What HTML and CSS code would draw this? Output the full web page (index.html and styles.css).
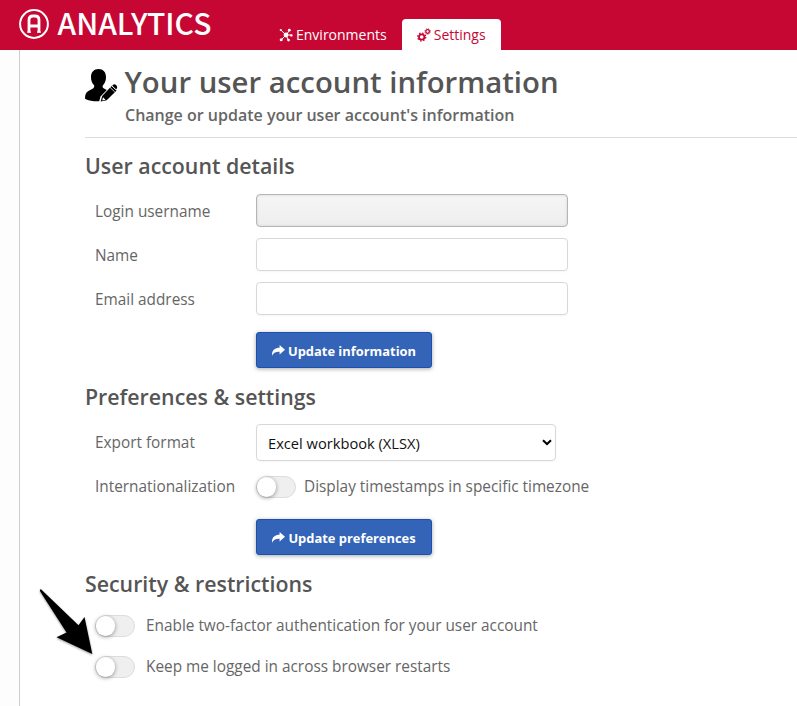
FILE: index.html
```html
<!DOCTYPE html>
<html lang="en">
<head>
<meta charset="utf-8">
<title>Analytics - Settings</title>
<link rel="stylesheet" href="styles.css">
</head>
<body>
<header class="topbar">
  <div class="brand">
    <svg class="brand-mark" viewBox="0 0 30 30" fill="none" stroke="#fff">
      <circle cx="15" cy="15" r="13.9" stroke-width="2"/>
      <path d="M10 23.5V11Q10 7 14 7H16Q20 7 20 11V23.5M10 17H20" stroke-width="2.8"/>
      <path d="M8.2 23.2H12M18 23.2H21.8" stroke-width="1.2"/>
    </svg>
    <span class="brand-name">ANALYTICS</span>
  </div>
  <nav class="tabs">
    <a class="tab">
      <svg class="tab-icon" viewBox="0 0 14 14" fill="currentColor" stroke="currentColor">
        <path d="M7 7L2 2.2M7 7L10.5 2.5M7 7H12.5M7 7L9.3 12M7 7L2.5 11.5" fill="none" stroke-width="1"/>
        <g stroke="none"><circle cx="7" cy="7" r="2.4"/><circle cx="1.8" cy="2" r="1.1"/><circle cx="10.3" cy="2.2" r="1.4"/><circle cx="12.4" cy="7.4" r="1.2"/><circle cx="9.5" cy="12.1" r="1.4"/><circle cx="2.2" cy="11.8" r="1.5"/></g>
      </svg><span>Environments</span>
    </a>
    <a class="tab tab-active">
      <svg class="tab-icon" viewBox="0 0 14 14" fill="none" stroke="currentColor">
        <circle cx="4.7" cy="9" r="2.7" stroke-width="1.8"/>
        <circle cx="4.7" cy="9" r="4" stroke-width="1.3" stroke-dasharray="1.5 1.64"/>
        <circle cx="10.6" cy="3.5" r="1.8" stroke-width="1.3"/>
        <circle cx="10.6" cy="3.5" r="2.7" stroke-width="1" stroke-dasharray="1.05 1.07"/>
      </svg><span>Settings</span>
    </a>
  </nav>
</header>
<div class="shell">
  <aside class="gutter"></aside>
  <main class="content">
    <div class="page-head">
      <svg class="user-icon" viewBox="0 0 32 33">
        <path d="M13.5 0C18.2 0 21 3.2 21 8C21 11.3 20 14.2 18 16.2C17.3 17 17.5 18.6 18.6 19.2C19.8 19.9 21 20.4 21.8 21L15.5 27.5L14.2 32.2H9C4.7 31.8 1.7 30.8 0 29.8C0 25.6 .8 23.3 3.4 21.9L8 19.5C9.3 18.8 9.6 17 8.9 16.1C7 14 6 11.4 6 8C6 3.2 9 0 13.5 0Z"/>
        <path d="M15.7 32.4L17.2 27L26.6 17.1L31.6 21.5L21.7 31.2Z"/>
        <path d="M28.1 15.7Q29.4 14.5 31 16L31.7 16.8Q32.7 18.2 31.7 19.7L31 20.5L27.2 16.7Z"/>
        <path d="M24.8 18.1L29.8 23M26.6 16.6L31.4 21.2" stroke="#fff" stroke-width=".8"/>
        <path d="M18 28.2L20.5 30.7L17.2 31.4Z" fill="#fff"/>
      </svg>
      <div>
        <h1>Your user account information</h1>
        <p class="subtitle">Change or update your user account's information</p>
      </div>
    </div>

    <section class="details">
      <h2>User account details</h2>
      <div class="row"><label>Login username</label><input type="text" disabled></div>
      <div class="row"><label>Name</label><input type="text"></div>
      <div class="row"><label>Email address</label><input type="text"></div>
      <button class="btn"><svg class="share" viewBox="0 0 13 11"><path d="M0 10.7C-.3 5.5 2.5 2.8 7.6 2.8V0L13 4.8L7.6 9.5V6.8C3.8 6.6 1.3 7.7 0 10.7Z" fill="#fff"/></svg><span>Update information</span></button>
    </section>

    <section class="preferences">
      <h2>Preferences &amp; settings</h2>
      <div class="row row-select"><label>Export format</label>
        <div class="select"><span>Excel workbook (XLSX)</span><svg class="chevron" viewBox="0 0 10 7"><path d="M1 1.2L5 5L9 1.2" fill="none" stroke="#000" stroke-width="2"/></svg></div>
      </div>
      <div class="row row-switch"><label>Internationalization</label><span class="switch"></span><span class="switch-text">Display timestamps in specific timezone</span></div>
      <button class="btn"><svg class="share" viewBox="0 0 13 11"><path d="M0 10.7C-.3 5.5 2.5 2.8 7.6 2.8V0L13 4.8L7.6 9.5V6.8C3.8 6.6 1.3 7.7 0 10.7Z" fill="#fff"/></svg><span>Update preferences</span></button>
    </section>

    <section class="security">
      <h2>Security &amp; restrictions</h2>
      <div class="option"><span class="switch"></span><span>Enable two-factor authentication for your user account</span></div>
      <div class="option"><span class="switch"></span><span>Keep me logged in across browser restarts</span></div>
    </section>
  </main>
</div>
<svg class="pointer" viewBox="0 0 56 70"><path d="M2 1.2L39.5 37.3L45.5 29L53.3 66L17.5 49.2L27.5 44.5L1.5 4Q0 1.5 2 1.2Z"/></svg>
</body>
</html>
```

FILE: styles.css
```css
* { box-sizing: border-box; }
body {
  margin: 0;
  height: 706px;
  overflow: hidden;
  position: relative;
  background: #fff;
  color: #666;
  font: 15.36px/22px "Open Sans", sans-serif;
}
.topbar {
  height: 50px;
  display: flex;
  align-items: flex-end;
  background: #c60734;
  color: #fff;
}
.brand {
  width: 265px;
  height: 50px;
  padding-left: 19px;
  display: flex;
  align-items: center;
  gap: 8.5px;
}
.brand-mark { width: 30px; height: 30px; margin-top: -2px; }
.brand-name {
  font: 500 30px/50px "Noto Sans CJK SC", sans-serif;
  margin-top: -6px;
}
.tabs { display: flex; }
.tab {
  height: 31px;
  padding: 0 15px;
  display: flex;
  align-items: center;
  gap: 3px;
  font-size: 14px;
  line-height: 31px;
}
.tab-icon { width: 14px; height: 14px; }
.tab:first-child { padding-left: 14px; }
.tab-active { background: #fff; color: #c60734; border-radius: 4px 4px 0 0; }
.shell { display: flex; height: 656px; }
.gutter { width: 20px; background: #fdfdfd; border-right: 1px solid #ccc; }
.content { flex: 1; padding-left: 65px; }
.page-head {
  height: 88px;
  padding-top: 12px;
  display: flex;
  gap: 8px;
  border-bottom: 1px solid #ddd;
}
.user-icon { width: 32px; height: 33px; margin-top: 7px; flex: none; overflow: visible; }
h1, h2, p { margin: 0; }
h1 { font-size: 29.33px; line-height: 40px; font-weight: 600; color: #555; margin-left: -.5px; }
.subtitle { font-size: 16px; line-height: 22px; font-weight: 600; margin-top: 2px; }
h2 { font-size: 21.33px; line-height: 30px; font-weight: 600; color: #555; }
.details { height: 231px; padding-top: 13px; }
.preferences { height: 187px; padding-top: 13px; }
.security { padding-top: 13px; }
.row { display: flex; height: 33px; align-items: center; padding-left: 10px; margin-bottom: 11px; }
.details h2 { margin-bottom: 13px; }
.preferences h2 { margin-bottom: 12px; }
.row label { width: 161px; flex: none; padding-top: 2px; }
.row input {
  width: 312px;
  height: 33px;
  border: 1px solid #d8d8d8;
  border-radius: 4px;
  background: #fff;
  box-shadow: 0 1px 2px rgba(0,0,0,.04);
}
.row input:disabled {
  border-color: #b5b5b5;
  background: linear-gradient(#f5f5f5, #eee);
  box-shadow: inset 0 0 3px rgba(0,0,0,.12);
}
.btn {
  width: 176px;
  height: 36px;
  margin: 17px 0 0 171px;
  padding: 2px 0 0;
  display: flex;
  align-items: center;
  justify-content: center;
  gap: 3px;
  border: 1px solid #1b50ac;
  border-radius: 3px;
  background: #3464b8;
  box-shadow: 0 1px 4px rgba(0,0,0,.35);
  color: #fff;
  font: 700 12.9px/20px "Open Sans", sans-serif;
}
.share { width: 13px; height: 11px; margin-top: -1px; }
.row-select { height: 37px; margin-bottom: 14px; }
.row-select label { padding-top: 0; }
.select {
  width: 300px;
  height: 37px;
  padding: 0 3px 0 11px;
  display: flex;
  align-items: center;
  justify-content: space-between;
  border: 1px solid #d8d8d8;
  border-radius: 4px;
  box-shadow: 0 1px 2px rgba(0,0,0,.04);
  color: #111;
  font-size: 14.67px;
}
.chevron { width: 10px; height: 7px; margin-top: -1px; }
.row-switch { height: 24px; margin-bottom: 14px; }
.row-switch label { padding-top: 0; }
.switch {
  width: 40px;
  height: 22px;
  flex: none;
  border: 1px solid #ddd;
  border-radius: 11px;
  background: #efefef;
}
.switch::before {
  content: "";
  display: block;
  width: 19px;
  height: 20px;
  border-radius: 10px;
  background: #fff;
  box-shadow: 0 1px 4px rgba(0,0,0,.4);
}
.switch-text { margin-left: 8px; }
.preferences .btn { margin-top: 20px; }
.security h2 { margin-bottom: 16px; }
.option { display: flex; align-items: center; height: 22px; gap: 11px; margin: 0 0 19px 10px; }
.pointer { position: absolute; left: 39px; top: 588px; width: 56px; height: 70px; filter: drop-shadow(0 1px 1px rgba(0,0,0,.4)); }
```
